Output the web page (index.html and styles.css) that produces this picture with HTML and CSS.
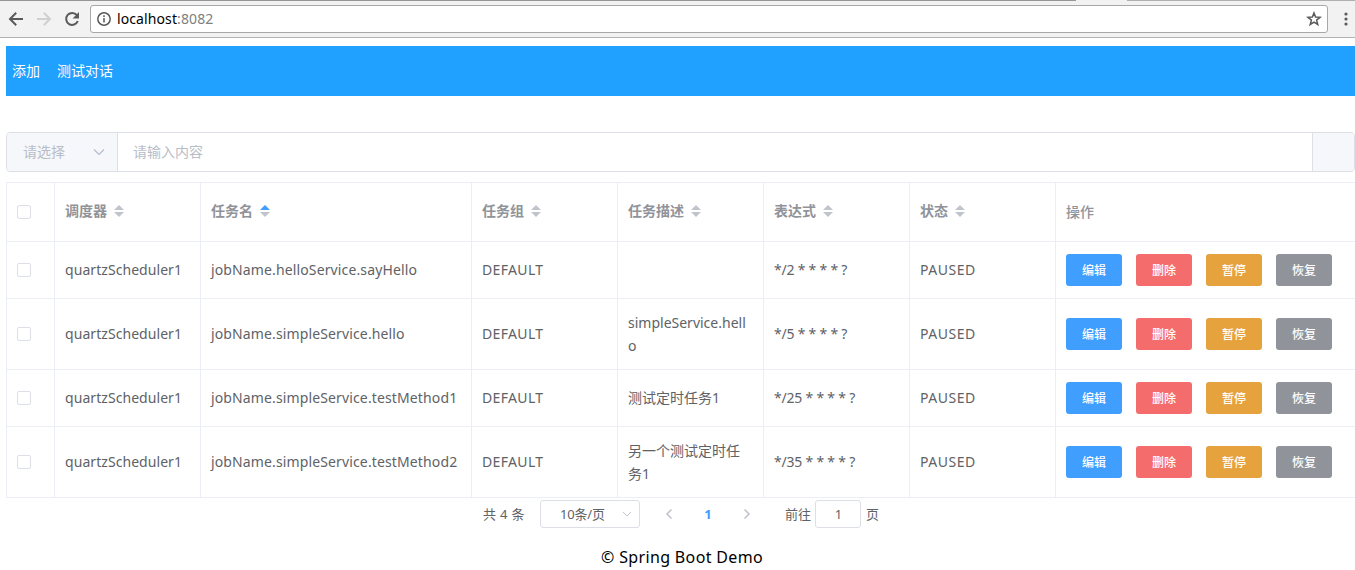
FILE: index.html
```
<!DOCTYPE html>
<html lang="zh-CN">
<head>
<meta charset="utf-8">
<title>Spring Boot Demo</title>
<link rel="stylesheet" href="styles.css">
</head>
<body>
<div class="browser">
  <div class="edge"><i class="edge-left"></i><i class="edge-right"></i></div>
  <div class="toolbar">
    <svg class="nav-icon" viewBox="0 0 16 16"><path d="M15 8H2.5M8.2 1.8 2 8l6.2 6.2" stroke="#5a5a5a"/></svg>
    <svg class="nav-icon" viewBox="0 0 16 16"><path d="M1 8h12.5M7.8 1.8 14 8l-6.2 6.2" stroke="#d0d0d0"/></svg>
    <svg class="nav-icon" viewBox="0 0 16 16"><path d="M12.9 4.2A6 6 0 1 0 13.8 10" stroke="#5a5a5a"/><path d="M15 1v6.4H8.6z" fill="#5a5a5a" stroke="none"/></svg>
    <div class="omnibox">
      <svg class="info" viewBox="0 0 14 14"><circle cx="7" cy="7" r="6.2"/><path d="M7 6v4.6M7 3.2v1.7"/></svg>
      <span class="url">localhost<span class="port">:8082</span></span>
      <svg class="star" viewBox="0 0 16 16"><path d="M8 1.9 9.6 6l4.5.3-3.5 2.8 1.2 4.4L8 11.1l-3.8 2.4 1.2-4.4L1.900 6.300 6.400 6z"/></svg>
    </div>
    <svg class="more" viewBox="0 0 4 14"><circle cx="2" cy="2" r="1.600"/><circle cx="2" cy="7" r="1.600"/><circle cx="2" cy="12" r="1.600"/></svg>
  </div>
</div>

<main class="page">
  <nav class="menu"><a>添加</a><a>测试对话</a></nav>

  <div class="search">
    <div class="search-select"><span>请选择</span><svg class="chev-down" viewBox="0 0 12 8"><path d="m1 1.500 5 5 5-5"/></svg></div>
    <div class="search-input">请输入内容</div>
    <div class="search-button"></div>
  </div>

  <div class="table">
    <div class="row head">
      <div class="cell pick"><i class="check"></i></div>
      <div class="cell">调度器<i class="sort"></i></div>
      <div class="cell">任务名<i class="sort asc"></i></div>
      <div class="cell">任务组<i class="sort"></i></div>
      <div class="cell">任务描述<i class="sort"></i></div>
      <div class="cell">表达式<i class="sort"></i></div>
      <div class="cell">状态<i class="sort"></i></div>
      <div class="cell plain">操作</div>
    </div>
    <div class="row">
      <div class="cell pick"><i class="check"></i></div>
      <div class="cell"><span class="sched">quartzScheduler1</span></div>
      <div class="cell"><span class="job">jobName.helloService.sayHello</span></div>
      <div class="cell"><span class="group">DEFAULT</span></div>
      <div class="cell"></div>
      <div class="cell"><span class="cron">*/2 * * * * ?</span></div>
      <div class="cell"><span class="state">PAUSED</span></div>
      <div class="cell actions"><b class="btn edit">编辑</b><b class="btn del">删除</b><b class="btn pause">暂停</b><b class="btn resume">恢复</b></div>
    </div>
    <div class="row tall">
      <div class="cell pick"><i class="check"></i></div>
      <div class="cell"><span class="sched">quartzScheduler1</span></div>
      <div class="cell"><span class="job">jobName.simpleService.hello</span></div>
      <div class="cell"><span class="group">DEFAULT</span></div>
      <div class="cell lines"><span class="desc">simpleService.hell<br>o</span></div>
      <div class="cell"><span class="cron">*/5 * * * * ?</span></div>
      <div class="cell"><span class="state">PAUSED</span></div>
      <div class="cell actions"><b class="btn edit">编辑</b><b class="btn del">删除</b><b class="btn pause">暂停</b><b class="btn resume">恢复</b></div>
    </div>
    <div class="row">
      <div class="cell pick"><i class="check"></i></div>
      <div class="cell"><span class="sched">quartzScheduler1</span></div>
      <div class="cell"><span class="job">jobName.simpleService.testMethod1</span></div>
      <div class="cell"><span class="group">DEFAULT</span></div>
      <div class="cell"><span class="desc">测试定时任务1</span></div>
      <div class="cell"><span class="cron">*/25 * * * * ?</span></div>
      <div class="cell"><span class="state">PAUSED</span></div>
      <div class="cell actions"><b class="btn edit">编辑</b><b class="btn del">删除</b><b class="btn pause">暂停</b><b class="btn resume">恢复</b></div>
    </div>
    <div class="row tall">
      <div class="cell pick"><i class="check"></i></div>
      <div class="cell"><span class="sched">quartzScheduler1</span></div>
      <div class="cell"><span class="job">jobName.simpleService.testMethod2</span></div>
      <div class="cell"><span class="group">DEFAULT</span></div>
      <div class="cell lines"><span class="desc">另一个测试定时任<br>务1</span></div>
      <div class="cell"><span class="cron">*/35 * * * * ?</span></div>
      <div class="cell"><span class="state">PAUSED</span></div>
      <div class="cell actions"><b class="btn edit">编辑</b><b class="btn del">删除</b><b class="btn pause">暂停</b><b class="btn resume">恢复</b></div>
    </div>
  </div>

  <div class="pager">
    <span class="total">共 4 条</span>
    <div class="size"><span>10条/页</span><svg class="chev-small" viewBox="0 0 10 6"><path d="m1 1 4 4 4-4"/></svg></div>
    <svg class="arrow prev" viewBox="0 0 8 12"><path d="M6.500 1.500 2 6l4.500 4.500"/></svg>
    <span class="current">1</span>
    <svg class="arrow next" viewBox="0 0 8 12"><path d="M1.500 1.500 6 6l-4.500 4.500"/></svg>
    <span class="goto">前往</span>
    <div class="goto-input">1</div>
    <span class="unit">页</span>
  </div>
  <footer class="footer">© Spring Boot Demo</footer>
</main>
</body>
</html>
```
FILE: styles.css
```
* { box-sizing: border-box; }
body {
  margin: 0;
  width: 1355px;
  height: 570px;
  overflow: hidden;
  background: #fff;
  color: #606266;
  font-family: "Noto Sans", "Noto Sans CJK SC", sans-serif;
  font-size: 14px;
}
svg { display: block; flex: none; fill: none; }
span { white-space: nowrap; }

.browser { height: 38px; background: #f2f2f2; border-bottom: 1px solid #b3b3b3; }
.edge { display: flex; justify-content: space-between; height: 1px; }
.edge i { height: 1px; }
.edge-left { width: 1076px; background: #969696; }
.edge-right { width: 228px; background: #b0b0b0; }
.toolbar { display: flex; align-items: center; height: 36px; padding-left: 8px; }
.nav-icon { width: 16px; height: 16px; margin-right: 12px; stroke-width: 2; }
.omnibox {
  display: flex;
  align-items: center;
  width: 1238px;
  height: 28px;
  margin-left: -2px;
  padding: 0 5px 0 6px;
  background: #fff;
  border: 1px solid #a8a8a8;
  border-radius: 3px;
}
.info { width: 14px; height: 14px; stroke: #5a5a5a; stroke-width: 1.5; }
.url { flex: 1; margin-left: 6px; color: #000; letter-spacing: 0.1px; line-height: 20px; }
.port { color: #808080; }
.star { width: 16px; height: 16px; stroke: #5a5a5a; stroke-width: 1.5; }
.more { width: 4px; height: 14px; margin-left: 16px; fill: #5a5a5a; }

.page { padding: 8px 0 0 6px; }
.menu { display: flex; align-items: center; gap: 17px; height: 50px; padding: 0 0 2px 6px; background: #20a0ff; color: #fff; }

.search { display: flex; height: 40px; margin-top: 36px; border: 1px solid #dcdfe6; border-radius: 4px; color: #b8bdc8; }
.search-select { display: flex; align-items: center; justify-content: space-between; width: 111px; padding: 0 12px 0 16px; background: #f5f7fa; border-right: 1px solid #dcdfe6; border-radius: 3px 0 0 3px; }
.search-select span { padding-bottom: 2px; }
.search-input { flex: 1; display: flex; align-items: center; padding: 0 0 2px 15px; }
.search-button { width: 42px; background: #f5f7fa; border-left: 1px solid #dcdfe6; border-radius: 0 3px 3px 0; }
.chev-down { width: 12px; height: 8px; stroke: #b4bccc; stroke-width: 1.2; }

.table { width: 1349px; margin-top: 10px; border: solid #ebeef5; border-width: 1px 0 0 1px; overflow: hidden; }
.row { display: grid; grid-template-columns: 48px 146px 271px 146px 146px 146px 146px 299px; width: 1348px; height: 57px; border-bottom: 1px solid #ebeef5; }
.tall { height: 71px; }
.head { height: 59px; color: #909399; font-weight: 700; }
.cell { display: flex; align-items: center; padding: 0 0 2px 10px; border-right: 1px solid #ebeef5; line-height: 23px; }
.cell:last-child { border-right: 0; }
.head .cell { padding-bottom: 3px; }
.head .plain { padding-bottom: 2px; font-weight: 500; }
.row .pick, .row .lines, .row .actions { padding-bottom: 0; }
.check { width: 14px; height: 14px; border: 1px solid #dcdfe6; border-radius: 2px; background: #fff; }
.sort { display: flex; flex-direction: column; gap: 2px; margin-left: 7px; }
.sort::before, .sort::after { content: ""; border: 5px solid transparent; }
.sort::before { border-top: 0; border-bottom-color: #c0c4cc; }
.sort::after { border-bottom: 0; border-top-color: #c0c4cc; }
.sort.asc::before { border-bottom-color: #409eff; }
.sched { letter-spacing: 0.06px; }
.job { letter-spacing: 0.13px; }
.group { letter-spacing: 0.35px; }
.state { letter-spacing: 0.5px; }
.cron { letter-spacing: -0.22px; }

.actions { gap: 14px; }
.btn { display: flex; align-items: center; justify-content: center; width: 56px; height: 32px; border-radius: 3px; color: #fff; font-size: 12px; font-weight: 500; }
.edit { background: #409eff; }
.del { background: #f56c6c; }
.pause { background: #e6a23c; }
.resume { background: #909399; }

.pager { display: flex; align-items: center; height: 28px; margin-top: 2px; padding-left: 477px; font-size: 13px; line-height: 28px; }
.total { width: 57px; letter-spacing: 0.3px; }
.size { display: flex; align-items: center; justify-content: space-between; width: 100px; height: 28px; padding: 0 7px 0 19px; border: 1px solid #dcdfe6; border-radius: 3px; }
.size span { margin-right: -10px; letter-spacing: -0.2px; }
.chev-small { width: 10px; height: 6px; stroke: #c0c4cc; }
.arrow { width: 8px; height: 12px; stroke: #c0c4cc; stroke-width: 1.6; }
.prev { margin-left: 25px; }
.current { width: 30px; margin: 0 20px; color: #409eff; font-weight: 700; text-align: center; }
.goto { width: 30px; margin-left: 34px; }
.goto-input { width: 46px; height: 28px; padding-left: 1px; border: 1px solid #dcdfe6; border-radius: 3px; text-align: center; line-height: 26px; }
.unit { margin-left: 5px; }
.footer { margin: 17px 0 0 595px; color: #000; font-size: 16px; letter-spacing: 0.35px; line-height: 24px; white-space: nowrap; }
```
